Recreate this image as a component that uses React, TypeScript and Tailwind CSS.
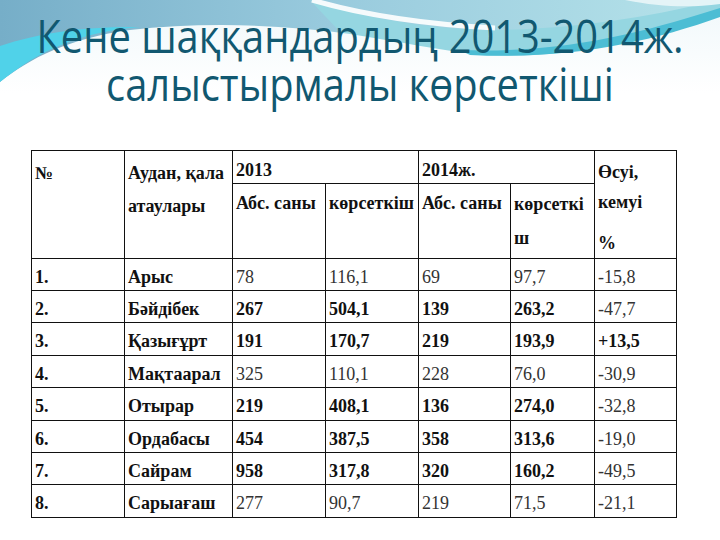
import React from 'react';

type Row = {
  num: string;
  name: string;
  values: string[];
  bold: boolean[];
  h: number;
};

const B = [true, true, true, true, false];
const ALL = [true, true, true, true, true];
const NONE = [false, false, false, false, false];

const rows: Row[] = [
  { num: '1.', name: 'Арыс', values: ['78', '116,1', '69', '97,7', '-15,8'], bold: NONE, h: 32 },
  { num: '2.', name: 'Бәйдібек', values: ['267', '504,1', '139', '263,2', '-47,7'], bold: B, h: 32 },
  { num: '3.', name: 'Қазығұрт', values: ['191', '170,7', '219', '193,9', '+13,5'], bold: ALL, h: 33 },
  { num: '4.', name: 'Мақтаарал', values: ['325', '110,1', '228', '76,0', '-30,9'], bold: NONE, h: 32 },
  { num: '5.', name: 'Отырар', values: ['219', '408,1', '136', '274,0', '-32,8'], bold: B, h: 33 },
  { num: '6.', name: 'Ордабасы', values: ['454', '387,5', '358', '313,6', '-19,0'], bold: B, h: 32 },
  { num: '7.', name: 'Сайрам', values: ['958', '317,8', '320', '160,2', '-49,5'], bold: B, h: 32 },
  { num: '8.', name: 'Сарыағаш', values: ['277', '90,7', '219', '71,5', '-21,1'], bold: NONE, h: 33 },
];

const cell = 'border border-[#111] px-[3px] align-top text-left';

const Background = () => (
  <svg
    viewBox="0 0 720 540"
    preserveAspectRatio="none"
    className="absolute inset-0 h-full w-full"
  >
    <defs>
      <linearGradient id="topBand" x1="0" y1="0" x2="1" y2="0">
        <stop offset="0" stopColor="#76aec8" />
        <stop offset="0.45" stopColor="#98cadd" />
        <stop offset="1" stopColor="#b6e3ea" />
      </linearGradient>
      <linearGradient id="whiteFade" x1="0" y1="0" x2="0" y2="1">
        <stop offset="0" stopColor="#f2f9fb" />
        <stop offset="0.15" stopColor="#ffffff" />
      </linearGradient>
    </defs>
    <rect width="720" height="100" fill="url(#topBand)" />
    {/* turquoise swoosh on the right */}
    <path
      d="M310 0 C 380 22, 440 30, 500 30 C 590 28, 660 14, 720 0 V 14 C 650 45, 560 60, 470 54 C 420 50, 380 42, 340 32 Z"
      fill="#95d6e1"
    />
    {/* white area under the band */}
    <path
      d="M0 82 C 30 58, 70 38, 130 30 C 200 22, 280 24, 350 34 C 400 42, 440 50, 480 55 C 580 60, 660 36, 720 14 V540 H0 Z"
      fill="url(#whiteFade)"
    />
    {/* cyan streak at the left */}
    <path d="M0 46 C 40 32, 90 26, 140 27 C 80 32, 40 50, 0 82 Z" fill="#50d2e9" />
    {/* darker stripe along the swoosh */}
    <path
      d="M460 50 C 570 54, 650 30, 720 8 V 17 C 650 42, 570 60, 470 55 Z"
      fill="#4cbdd4"
    />
    {/* white highlight line */}
    <path
      d="M312 0 C 360 14, 420 24, 495 28"
      stroke="#ffffff"
      strokeWidth="5"
      fill="none"
      opacity="0.9"
    />
    <path d="M625 0 H720 V4 C 690 8, 660 7, 625 0 Z" fill="#e4f4f7" />
  </svg>
);

export default function App() {
  return (
    <div className="relative h-[540px] w-[720px] overflow-hidden bg-white">
      <Background />
      <div className="relative flex flex-col">
        <h1
          className="-mx-[60px] scale-x-[0.866] whitespace-nowrap pt-[11px] text-center text-[46px] font-normal leading-[48px] text-[#115870]"
          style={{ fontFamily: '"Open Sans", "Noto Sans", sans-serif' }}
        >
          <div>Кене шаққандардың 2013-2014ж.</div>
          <div>салыстырмалы көрсеткіші</div>
        </h1>

        <table
          className="ml-[31px] mt-[43px] w-[645px] table-fixed border-collapse bg-white text-[18px] text-[#111]"
          style={{ fontFamily: '"Liberation Serif", "Times New Roman", serif' }}
        >
          <colgroup>
            <col className="w-[93px]" />
            <col className="w-[108px]" />
            <col className="w-[93px]" />
            <col className="w-[93px]" />
            <col className="w-[92px]" />
            <col className="w-[84px]" />
            <col className="w-[82px]" />
          </colgroup>
          <thead>
            <tr className="h-[33px]">
              <th rowSpan={2} className={`${cell} pt-[6px] font-bold leading-[33px]`}>
                №
              </th>
              <th rowSpan={2} className={`${cell} pt-[6px] font-bold leading-[33px]`}>
                Аудан, қала
                <br />
                атаулары
              </th>
              <th colSpan={2} className={`${cell} h-[33px] pt-[6px] font-bold leading-[26px]`}>
                2013
              </th>
              <th colSpan={2} className={`${cell} h-[33px] pt-[6px] font-bold leading-[26px]`}>
                2014ж.
              </th>
              <th rowSpan={2} className={`${cell} pt-[6px] font-bold leading-[30px]`}>
                Өсуі,
                <br />
                кемуі
                <div className="mt-[11px]">%</div>
              </th>
            </tr>
            <tr className="h-[75px]">
              <th className={`${cell} h-[75px] pt-[3px] font-bold leading-[33px]`}>Абс. саны</th>
              <th className={`${cell} h-[75px] pt-[3px] font-bold leading-[33px]`}>көрсеткіш</th>
              <th className={`${cell} h-[75px] pt-[3px] font-bold leading-[33px]`}>Абс. саны</th>
              <th className={`${cell} h-[75px] pt-[3px] font-bold leading-[34px]`}>
                көрсеткі
                <br />
                ш
              </th>
            </tr>
          </thead>
          <tbody>
            {rows.map((r) => (
              <tr key={r.num} style={{ height: r.h }}>
                <td className={`${cell} pt-[6px] font-bold leading-[24px]`}>{r.num}</td>
                <td className={`${cell} pt-[6px] font-bold leading-[24px]`}>{r.name}</td>
                {r.values.map((v, i) => (
                  <td
                    key={i}
                    className={`${cell} pt-[6px] leading-[24px] ${r.bold[i] ? 'font-bold' : 'font-normal text-[#333]'}`}
                  >
                    {v}
                  </td>
                ))}
              </tr>
            ))}
          </tbody>
        </table>
      </div>
    </div>
  );
}
